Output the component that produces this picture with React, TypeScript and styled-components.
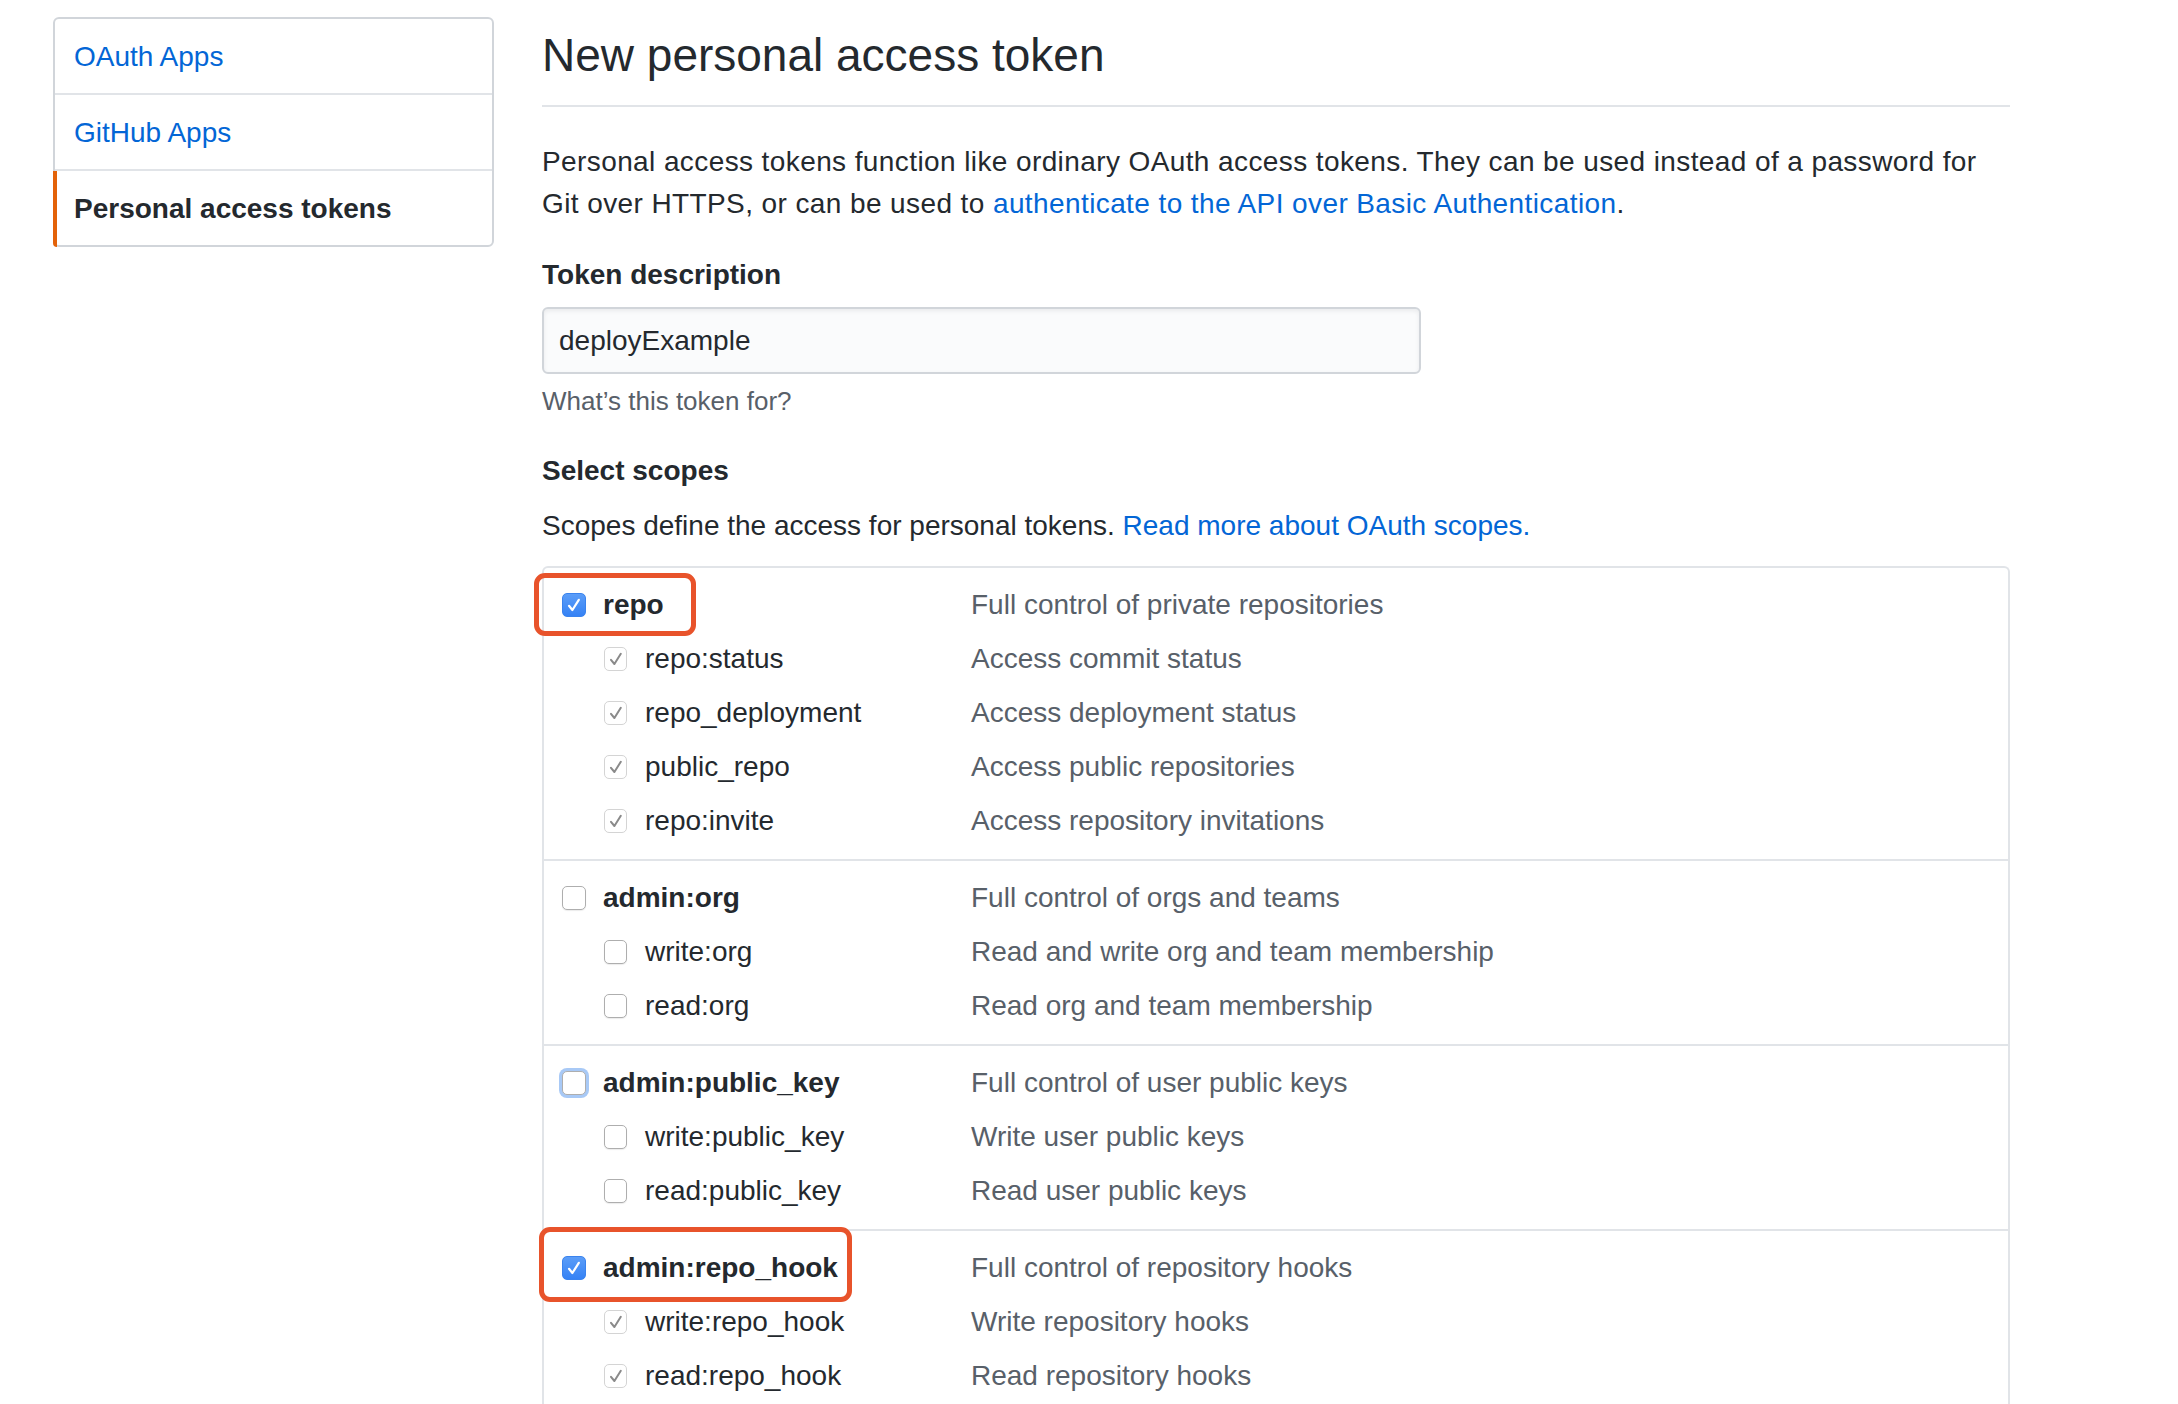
import React from "react";
import styled, { createGlobalStyle } from "styled-components";

const Global = createGlobalStyle`
  html, body { margin: 0; padding: 0; background: #ffffff; }
  body { font-family: "Liberation Sans", Arial, sans-serif; color: #24292e; }
  * { box-sizing: border-box; }
`;

const Page = styled.div`
  display: flex;
  align-items: flex-start;
  gap: 48px;
  padding: 17px 0 0 53px;
  width: 2178px;
  height: 1404px;
  overflow: hidden;
`;

const Menu = styled.nav`
  width: 441px;
  flex: none;
  border: 2px solid #d1d5da;
  border-radius: 6px;
  display: flex;
  flex-direction: column;
  background: #fff;
`;

const MenuItem = styled.a<{ $active?: boolean }>`
  position: relative;
  display: flex;
  align-items: center;
  height: ${(p) => (p.$active ? "74px" : "76px")};
  padding: 2px 0 0 19px;
  font-size: 28px;
  text-decoration: none;
  color: ${(p) => (p.$active ? "#24292e" : "#0366d6")};
  font-weight: ${(p) => (p.$active ? 700 : 400)};
  border-bottom: ${(p) => (p.$active ? "none" : "2px solid #e1e4e8")};
  &::before {
    content: "";
    display: ${(p) => (p.$active ? "block" : "none")};
    position: absolute;
    left: -2px;
    top: 0;
    bottom: -2px;
    width: 4px;
    background: #e36209;
    border-bottom-left-radius: 6px;
  }
`;

const Main = styled.main`
  width: 1468px;
  flex: none;
`;

const Subhead = styled.div`
  margin-top: 9px;
  padding-bottom: 21px;
  border-bottom: 2px solid #e1e4e8;
`;

const Title = styled.h2`
  margin: 0;
  font-size: 46px;
  line-height: 58px;
  font-weight: 400;
  color: #24292e;
`;

const Para = styled.p`
  margin: 34px 0 0;
  max-width: 1440px;
  font-size: 28px;
  line-height: 42px;
  letter-spacing: 0.4px;
  color: #24292e;
`;

const Link = styled.a`
  color: #0366d6;
  text-decoration: none;
`;

const Label = styled.div<{ $top: number }>`
  margin-top: ${(p) => p.$top}px;
  font-size: 28px;
  line-height: 42px;
  font-weight: 700;
  color: #24292e;
`;

const Input = styled.input`
  display: block;
  margin-top: 11px;
  width: 879px;
  height: 67px;
  padding: 0 15px;
  font-family: "Liberation Sans", Arial, sans-serif;
  font-size: 28px;
  color: #24292e;
  background: #fafbfc;
  border: 2px solid #d1d5da;
  border-radius: 6px;
  box-shadow: inset 0 2px 4px rgba(27, 31, 35, 0.075);
  outline: none;
`;

const Note = styled.p`
  margin: 8px 0 0;
  font-size: 26px;
  line-height: 39px;
  color: #586069;
`;

const ScopeDesc = styled.p`
  margin: 13px 0 0;
  font-size: 28px;
  line-height: 42px;
  color: #24292e;
`;

const ScopeTable = styled.div`
  margin-top: 19px;
  border: 2px solid #e1e4e8;
  border-bottom: none;
  border-radius: 6px 6px 0 0;
`;

const Group = styled.div`
  padding: 10px 0 11px;
  & + & {
    border-top: 2px solid #e1e4e8;
  }
`;

const Row = styled.div`
  position: relative;
  display: grid;
  grid-template-columns: 427px 1fr;
  height: 54px;
  align-items: center;
`;

const NameCell = styled.div<{ $sub?: boolean }>`
  display: flex;
  align-items: center;
  gap: ${(p) => (p.$sub ? "18px" : "17px")};
  padding-left: ${(p) => (p.$sub ? "60px" : "18px")};
  font-size: 28px;
  font-weight: ${(p) => (p.$sub ? 400 : 700)};
  color: #24292e;
  white-space: nowrap;
`;

const DescCell = styled.div`
  font-size: 28px;
  color: #586069;
  white-space: nowrap;
`;

type BoxKind = "checked" | "disabled" | "empty" | "focus";

const Box = styled.span<{ $kind: BoxKind; $big?: boolean }>`
  flex: none;
  display: inline-flex;
  align-items: center;
  justify-content: center;
  width: ${(p) => (p.$big ? "24px" : "23px")};
  height: ${(p) => (p.$big ? "24px" : "24px")};
  border-radius: 5px;
  background: ${(p) =>
    p.$kind === "checked"
      ? "linear-gradient(#5b9df8, #3582f5)"
      : "#ffffff"};
  border: ${(p) =>
    p.$kind === "checked"
      ? "1px solid #3a83ee"
      : p.$kind === "disabled"
      ? "1.5px solid #d4d4d4"
      : "1.5px solid #aeaeae"};
  box-shadow: ${(p) =>
    p.$kind === "focus"
      ? "0 0 0 3px #a8c9f6"
      : p.$kind === "empty"
      ? "0 1px 1px rgba(0,0,0,0.08)"
      : "none"};
`;

const Annot = styled.div<{ $l: number; $t: number; $w: number; $h: number }>`
  position: absolute;
  left: ${(p) => p.$l}px;
  top: ${(p) => p.$t}px;
  width: ${(p) => p.$w}px;
  height: ${(p) => p.$h}px;
  border: 5px solid #e8532b;
  border-radius: 11px;
  pointer-events: none;
`;

const Check = ({ color, width }: { color: string; width: number }) => (
  <svg width="20" height="20" viewBox="0 0 20 20" fill="none">
    <path
      d="M5 10.8 L8.4 15 L14.8 4.8"
      stroke={color}
      strokeWidth={width}
      strokeLinecap="round"
      strokeLinejoin="round"
    />
  </svg>
);

const CheckBox = ({ kind, big }: { kind: BoxKind; big?: boolean }) => (
  <Box $kind={kind} $big={big}>
    {kind === "checked" && <Check color="#ffffff" width={2.2} />}
    {kind === "disabled" && <Check color="#8a8a8a" width={2} />}
  </Box>
);

type Scope = {
  name: string;
  desc: string;
  kind: BoxKind;
  subs: { name: string; desc: string; kind: BoxKind }[];
  annot?: { l: number; t: number; w: number; h: number };
};

const scopes: Scope[] = [
  {
    name: "repo",
    desc: "Full control of private repositories",
    kind: "checked",
    annot: { l: -10, t: -5, w: 162, h: 63 },
    subs: [
      { name: "repo:status", desc: "Access commit status", kind: "disabled" },
      { name: "repo_deployment", desc: "Access deployment status", kind: "disabled" },
      { name: "public_repo", desc: "Access public repositories", kind: "disabled" },
      { name: "repo:invite", desc: "Access repository invitations", kind: "disabled" },
    ],
  },
  {
    name: "admin:org",
    desc: "Full control of orgs and teams",
    kind: "empty",
    subs: [
      { name: "write:org", desc: "Read and write org and team membership", kind: "empty" },
      { name: "read:org", desc: "Read org and team membership", kind: "empty" },
    ],
  },
  {
    name: "admin:public_key",
    desc: "Full control of user public keys",
    kind: "focus",
    subs: [
      { name: "write:public_key", desc: "Write user public keys", kind: "empty" },
      { name: "read:public_key", desc: "Read user public keys", kind: "empty" },
    ],
  },
  {
    name: "admin:repo_hook",
    desc: "Full control of repository hooks",
    kind: "checked",
    annot: { l: -5, t: -14, w: 313, h: 75 },
    subs: [
      { name: "write:repo_hook", desc: "Write repository hooks", kind: "disabled" },
      { name: "read:repo_hook", desc: "Read repository hooks", kind: "disabled" },
    ],
  },
];

export default function App() {
  return (
    <>
      <Global />
      <Page>
        <Menu>
          <MenuItem href="#">OAuth Apps</MenuItem>
          <MenuItem href="#">GitHub Apps</MenuItem>
          <MenuItem href="#" $active>
            Personal access tokens
          </MenuItem>
        </Menu>
        <Main>
          <Subhead>
            <Title>New personal access token</Title>
          </Subhead>
          <Para>
            Personal access tokens function like ordinary OAuth access tokens. They can be used instead of a password for
            Git over HTTPS, or can be used to <Link href="#">authenticate to the API over Basic Authentication</Link>.
          </Para>
          <Label $top={29}>Token description</Label>
          <Input defaultValue="deployExample" readOnly />
          <Note>What’s this token for?</Note>
          <Label $top={29}>Select scopes</Label>
          <ScopeDesc>
            Scopes define the access for personal tokens. <Link href="#">Read more about OAuth scopes.</Link>
          </ScopeDesc>
          <ScopeTable>
            {scopes.map((s) => (
              <Group key={s.name}>
                <Row>
                  <NameCell>
                    <CheckBox kind={s.kind} big />
                    {s.name}
                  </NameCell>
                  <DescCell>{s.desc}</DescCell>
                  {s.annot && <Annot $l={s.annot.l} $t={s.annot.t} $w={s.annot.w} $h={s.annot.h} />}
                </Row>
                {s.subs.map((sub) => (
                  <Row key={sub.name}>
                    <NameCell $sub>
                      <CheckBox kind={sub.kind} />
                      {sub.name}
                    </NameCell>
                    <DescCell>{sub.desc}</DescCell>
                  </Row>
                ))}
              </Group>
            ))}
          </ScopeTable>
        </Main>
      </Page>
    </>
  );
}
